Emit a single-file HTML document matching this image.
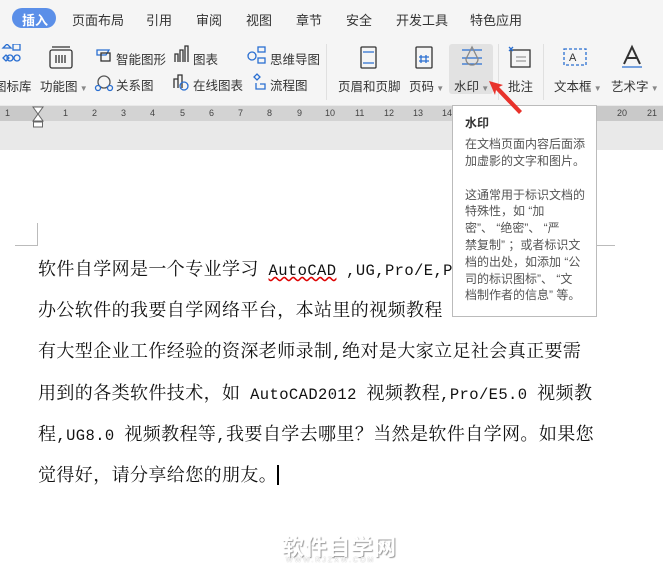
<html><head><style>
body{margin:0;width:663px;height:586px;overflow:hidden;background:#fff;font-family:"Liberation Sans","Noto Sans CJK SC",sans-serif;position:relative}
.a{position:absolute}
.tab{position:absolute;top:10px;font-size:13px;color:#333}
.lbl{position:absolute;font-size:12.5px;color:#333;white-space:nowrap}
.doc{position:absolute;left:38px;font-family:"Noto Serif CJK SC",serif;font-size:18px;color:#111;white-space:nowrap;letter-spacing:0.4px}
.m{font-family:"Liberation Mono",monospace;font-size:15.5px}
.tt{font-size:12px;color:#555;line-height:16.8px;white-space:nowrap}
</style></head><body>
<div class="a" style="left:0;top:0;width:663px;height:105px;background:#f5f5f5"></div>
<div class="a" style="left:12px;top:8px;width:44px;height:20px;border-radius:10px;background:#5b8fe8"></div>
<div class="tab" style="left:22px;color:#fff;font-weight:bold">插入</div>
<div class="tab" style="left:72px">页面布局</div>
<div class="tab" style="left:146px">引用</div>
<div class="tab" style="left:196px">审阅</div>
<div class="tab" style="left:246px">视图</div>
<div class="tab" style="left:296px">章节</div>
<div class="tab" style="left:346px">安全</div>
<div class="tab" style="left:396px">开发工具</div>
<div class="tab" style="left:470px">特色应用</div>
<div class="a" style="left:449px;top:44px;width:44px;height:50px;background:#e2e2e2;border-radius:3px"></div>
<div class="a" style="left:326px;top:44px;width:1px;height:56px;background:#e0e0e0"></div>
<div class="a" style="left:498px;top:44px;width:1px;height:56px;background:#e0e0e0"></div>
<div class="a" style="left:543px;top:44px;width:1px;height:56px;background:#e0e0e0"></div>
<svg class="a" style="left:0;top:44px" width="663" height="30" fill="none" stroke-width="1.3">
<g stroke="#2a6fd1"><path d="M3 4l4-4 4 4z"/><rect x="13" y="0" width="7" height="6"/><circle cx="10" cy="14" r="3"/><circle cx="17" cy="14" r="3"/><path d="M3 14l3-3 3 3-3 3z"/></g>
<g stroke="#333"><rect x="50" y="6" width="22" height="18" rx="2"/><path d="M52 3h18M56 11v8M59 11v8M62 11v8M65 11v8"/></g>
<path d="M97 6h12l-3 5H97z" stroke="#2a6fd1"/><rect x="101" y="9" width="9" height="8" stroke="#333"/>
<path d="M175 18V10h3v8M180 18V6h3v12M185 18V2h3v16" stroke="#333"/>
<circle cx="252" cy="12" r="4" stroke="#2a6fd1"/><rect x="258" y="3" width="7" height="5" stroke="#2a6fd1"/><rect x="258" y="14" width="7" height="5" stroke="#2a6fd1"/>
<rect x="361" y="3" width="15" height="21" rx="1" stroke="#333"/><path d="M363 8h11M363 19h11" stroke="#2a6fd1"/>
<rect x="416" y="3" width="16" height="21" rx="1" stroke="#333"/><path d="M421 11v8M426 11v8M419 13h10M419 17h10" stroke="#2a6fd1"/>
<path d="M462 6h20M462 14h20M462 20h20" stroke="#2a6fd1"/><path d="M472 3l-6 12a6 6 0 0 0 12 0z" stroke="#888"/>
<rect x="511" y="6" width="19" height="17" stroke="#333"/><path d="M516 13h10M516 17h10" stroke="#999"/><path d="M509 3l4 4M513 3l-4 4" stroke="#2a6fd1"/>
<rect x="564" y="5" width="22" height="16" stroke="#2a6fd1" stroke-dasharray="3 2"/><text x="569" y="17" font-size="11" fill="#333" stroke="none">A</text>
<path d="M624 20l8-17 8 17M627 14h10" stroke="#333" stroke-width="2"/><path d="M622 23h20" stroke="#2a6fd1"/>
</svg>
<div class="lbl" style="left:-6px;top:76px">图标库</div>
<div class="lbl" style="left:40px;top:76px">功能图<span style="font-size:8px;color:#888"> ▼</span></div>
<div class="lbl" style="left:116px;top:49px">智能图形</div>
<div class="lbl" style="left:193px;top:49px">图表</div>
<div class="lbl" style="left:270px;top:49px">思维导图</div>
<svg class="a" style="left:94px;top:73px" width="230" height="20" fill="none" stroke-width="1.3"><circle cx="10" cy="9" r="6" stroke="#555"/><circle cx="4" cy="15" r="2.5" stroke="#2a6fd1"/><circle cx="16" cy="15" r="2.5" stroke="#2a6fd1"/><path d="M80 15V6h4v9M84 15V2h4v13" stroke="#333"/><circle cx="90" cy="13" r="4" stroke="#2a6fd1"/><path d="M160 4l3-3 3 3-3 3zM162 10v6h9v-5h-5" stroke="#2a6fd1"/></svg>
<div class="lbl" style="left:116px;top:75px">关系图</div>
<div class="lbl" style="left:193px;top:75px">在线图表</div>
<div class="lbl" style="left:270px;top:75px">流程图</div>
<div class="lbl" style="left:338px;top:76px">页眉和页脚</div>
<div class="lbl" style="left:409px;top:76px">页码<span style="font-size:8px;color:#888"> ▼</span></div>
<div class="lbl" style="left:454px;top:76px">水印<span style="font-size:8px;color:#888"> ▼</span></div>
<div class="lbl" style="left:508px;top:76px">批注</div>
<div class="lbl" style="left:554px;top:76px">文本框<span style="font-size:8px;color:#888"> ▼</span></div>
<div class="lbl" style="left:611px;top:76px">艺术字<span style="font-size:8px;color:#888"> ▼</span></div>
<div class="a" style="left:0;top:105px;width:663px;height:45px;background:#e9e9e9"></div>
<div class="a" style="left:0;top:106px;width:663px;height:15px;background:#c9c9c9"></div>
<div class="a" style="left:38px;top:106px;width:555px;height:15px;background:#d3d3d3"></div>
<div class="a" style="left:0;top:108px;width:663px;font-size:9px;color:#444;font-family:'Liberation Sans'">
<span class="a" style="left:5px">1</span><span class="a" style="left:63px">1</span><span class="a" style="left:92px">2</span><span class="a" style="left:121px">3</span><span class="a" style="left:150px">4</span><span class="a" style="left:180px">5</span><span class="a" style="left:209px">6</span><span class="a" style="left:238px">7</span><span class="a" style="left:267px">8</span><span class="a" style="left:297px">9</span><span class="a" style="left:325px">10</span><span class="a" style="left:355px">11</span><span class="a" style="left:384px">12</span><span class="a" style="left:413px">13</span><span class="a" style="left:442px">14</span><span class="a" style="left:617px">20</span><span class="a" style="left:647px">21</span></div>
<svg class="a" style="left:32px;top:106px" width="12" height="22"><path d="M1 1h10L6 8zM6 8l5 7H1z" fill="#fff" stroke="#666"/><rect x="1.5" y="16" width="9" height="5" fill="#fff" stroke="#666"/></svg>
<div class="a" style="left:37px;top:223px;width:1px;height:23px;background:#bbb"></div>
<div class="a" style="left:15px;top:245px;width:23px;height:1px;background:#bbb"></div>
<div class="a" style="left:597px;top:245px;width:18px;height:1px;background:#bbb"></div>
<div class="doc" style="top:255px">软件自学网是一个专业学习<span class="m"> <span style="text-decoration:underline wavy #d00">AutoCAD</span> ,UG,Pro/E,PS</span></div>
<div class="doc" style="top:296px">办公软件的我要自学网络平台，本站里的视频教程</div>
<div class="doc" style="top:337px">有大型企业工作经验的资深老师录制<span class="m">,</span>绝对是大家立足社会真正要需</div>
<div class="doc" style="top:379px">用到的各类软件技术，如<span class="m"> AutoCAD2012 </span>视频教程<span class="m">,Pro/E5.0 </span>视频教</div>
<div class="doc" style="top:420px">程<span class="m">,UG8.0 </span>视频教程等<span class="m">,</span>我要自学去哪里？当然是软件自学网。如果您</div>
<div class="doc" style="top:461px">觉得好，请分享给您的朋友。<span style="display:inline-block;width:2px;height:20px;background:#000;vertical-align:-4px"></span></div>
<div class="a" style="left:452px;top:105px;width:145px;height:212px;background:#fff;border:1px solid #bbb;padding:0 0 0 12px;box-sizing:border-box">
<div style="font-size:12px;font-weight:bold;color:#333;margin-top:8px">水印</div>
<div class="tt" style="margin-top:5px">在文档页面内容后面添<br>加虚影的文字和图片。</div>
<div class="tt" style="margin-top:17px">这通常用于标识文档的<br>特殊性，如 “加<br>密”、 “绝密”、 “严<br>禁复制” ；或者标识文<br>档的出处，如添加 “公<br>司的标识图标”、 “文<br>档制作者的信息” 等。</div>
</div>
<svg class="a" style="left:480px;top:75px" width="50" height="50"><path d="M9 6l14 4-4 2 23 24-3 3-23-24-1 5z" fill="#e8322b"/></svg>
<div class="a" style="left:282px;top:530px;font-size:22px;font-weight:bold;color:#fff;text-shadow:1px 1px 1px #999;letter-spacing:1px">软件自学网</div>
<div class="a" style="left:286px;top:557px;font-size:7px;color:#fff;text-shadow:0 0 1px #999;letter-spacing:2px">WWW.RJZXW.COM</div>
</body></html>
